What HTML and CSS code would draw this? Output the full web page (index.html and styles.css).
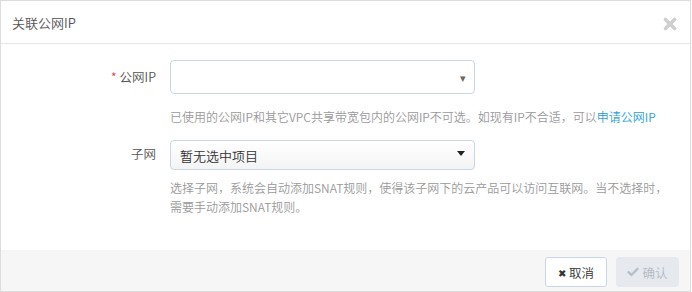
FILE: index.html
```html
<!DOCTYPE html>
<html lang="zh">
<head>
<meta charset="utf-8">
<link rel="stylesheet" href="styles.css">
</head>
<body>
<div class="modal">
  <div class="modal-header">
    <span class="title">关联公网IP</span>
    <span class="close" aria-label="close">
      <svg width="14" height="14" viewBox="0 0 14 14"><path d="M2.5 2.5 L11.5 11.5 M11.5 2.5 L2.5 11.5" stroke="#cfcfcf" stroke-width="3.6" stroke-linecap="round"/></svg>
    </span>
  </div>
  <div class="modal-body">
    <div class="form-row">
      <label class="label"><span class="req">*</span>公网IP</label>
      <div class="control">
        <div class="select select-ip"><span class="caret-small">▾</span></div>
        <p class="help help-ip">已使用的公网IP和其它VPC共享带宽包内的公网IP不可选。如现有IP不合适，可以<a class="link">申请公网IP</a></p>
      </div>
    </div>
    <div class="form-row">
      <label class="label label-subnet">子网</label>
      <div class="control">
        <div class="select select-subnet"><span class="value">暂无选中项目</span><span class="caret"></span></div>
        <p class="help help-subnet">选择子网，系统会自动添加SNAT规则，使得该子网下的云产品可以访问互联网。当不选择时，需要手动添加SNAT规则。</p>
      </div>
    </div>
  </div>
  <div class="modal-footer">
    <button class="btn btn-cancel"><span class="ico">✖</span>取消</button>
    <button class="btn btn-ok" disabled><span class="ico">
      <svg width="12" height="10" viewBox="0 0 12 10"><path d="M1.5 5.2 L4.5 8 L10.5 1.8" fill="none" stroke="#b9bfc6" stroke-width="2.4" stroke-linecap="round" stroke-linejoin="round"/></svg>
    </span>确认</button>
  </div>
</div>
</body>
</html>
```
FILE: styles.css
```css
* { box-sizing: border-box; }
html, body { margin: 0; padding: 0; background: #fff; }
body {
  font-family: "Noto Sans CJK SC", "Noto Sans", "Liberation Sans", sans-serif;
  font-size: 12px;
  color: #333;
}
.modal {
  width: 691px;
  height: 292px;
  border: 1px solid #dcdcdc;
  display: flex;
  flex-direction: column;
  background: #fff;
}
.modal-header {
  height: 43px;
  border-bottom: 1px solid #e3e6ea;
  display: flex;
  align-items: center;
  justify-content: space-between;
  padding: 0 13px 0 11px;
  flex: none;
}
.title { font-size: 13px; color: #555; font-weight: 350; }
.close { display: flex; margin-top: 3px; }
.modal-body {
  flex: 1;
  padding-top: 16px;
}
.form-row {
  display: grid;
  grid-template-columns: 155px 1fr;
  column-gap: 14px;
}
.label {
  text-align: right;
  font-size: 12.5px;
  color: #555;
  line-height: 34px;
  font-weight: 350;
}
.label-subnet { line-height: 30px; }
.req { color: #e4393c; margin-right: 3px; font-size: 12px; }
.control { display: flex; flex-direction: column; }
.select {
  width: 305px;
  border: 1px solid #c9d6e4;
  border-radius: 4px;
  position: relative;
  display: flex;
  align-items: center;
}
.select-ip { height: 34px; background: #fff; justify-content: flex-end; padding-right: 8px; }
.caret-small { color: #666; font-size: 11px; line-height: 1; }
.select-subnet {
  height: 30px;
  background: linear-gradient(#ffffff, #f4f4f4);
  justify-content: space-between;
  padding: 0 9px 0 9px;
  margin-top: 1px;
}
.select-subnet .value { font-size: 13px; color: #333; font-weight: 350; }
.caret {
  width: 0; height: 0;
  border-left: 4.5px solid transparent;
  border-right: 4.5px solid transparent;
  border-top: 5px solid #222;
  margin-top: -3px;
}
.help {
  margin: 0;
  color: #9a9a9a;
  font-size: 12px;
  line-height: 19px;
  font-weight: 350;
}
.help-ip { margin-top: 13px; margin-bottom: 13px; }
.help-subnet { margin-top: 8px; width: 500px; }
.link { color: #2c9fd9; text-decoration: none; }
.modal-footer {
  flex: none;
  height: 41px;
  background: #f6f6f6;
  display: flex;
  justify-content: flex-end;
  align-items: flex-start;
  gap: 9px;
  padding: 7px 11px 0 0;
}
.btn {
  height: 30px;
  border-radius: 3px;
  font-family: inherit;
  font-size: 12.5px;
  font-weight: 350;
  display: flex;
  align-items: center;
  justify-content: center;
  gap: 3px;
  padding: 0;
}
.btn .ico { display: flex; align-items: center; }
.btn-cancel {
  width: 62px;
  background: #fff;
  border: 1px solid #c9d6e4;
  color: #333;
}
.btn-cancel .ico { font-size: 10px; color: #333; }
.btn-ok {
  width: 63px;
  background: #e6e9ed;
  border: 1px solid #e6e9ed;
  color: #b4bac1;
}
```
